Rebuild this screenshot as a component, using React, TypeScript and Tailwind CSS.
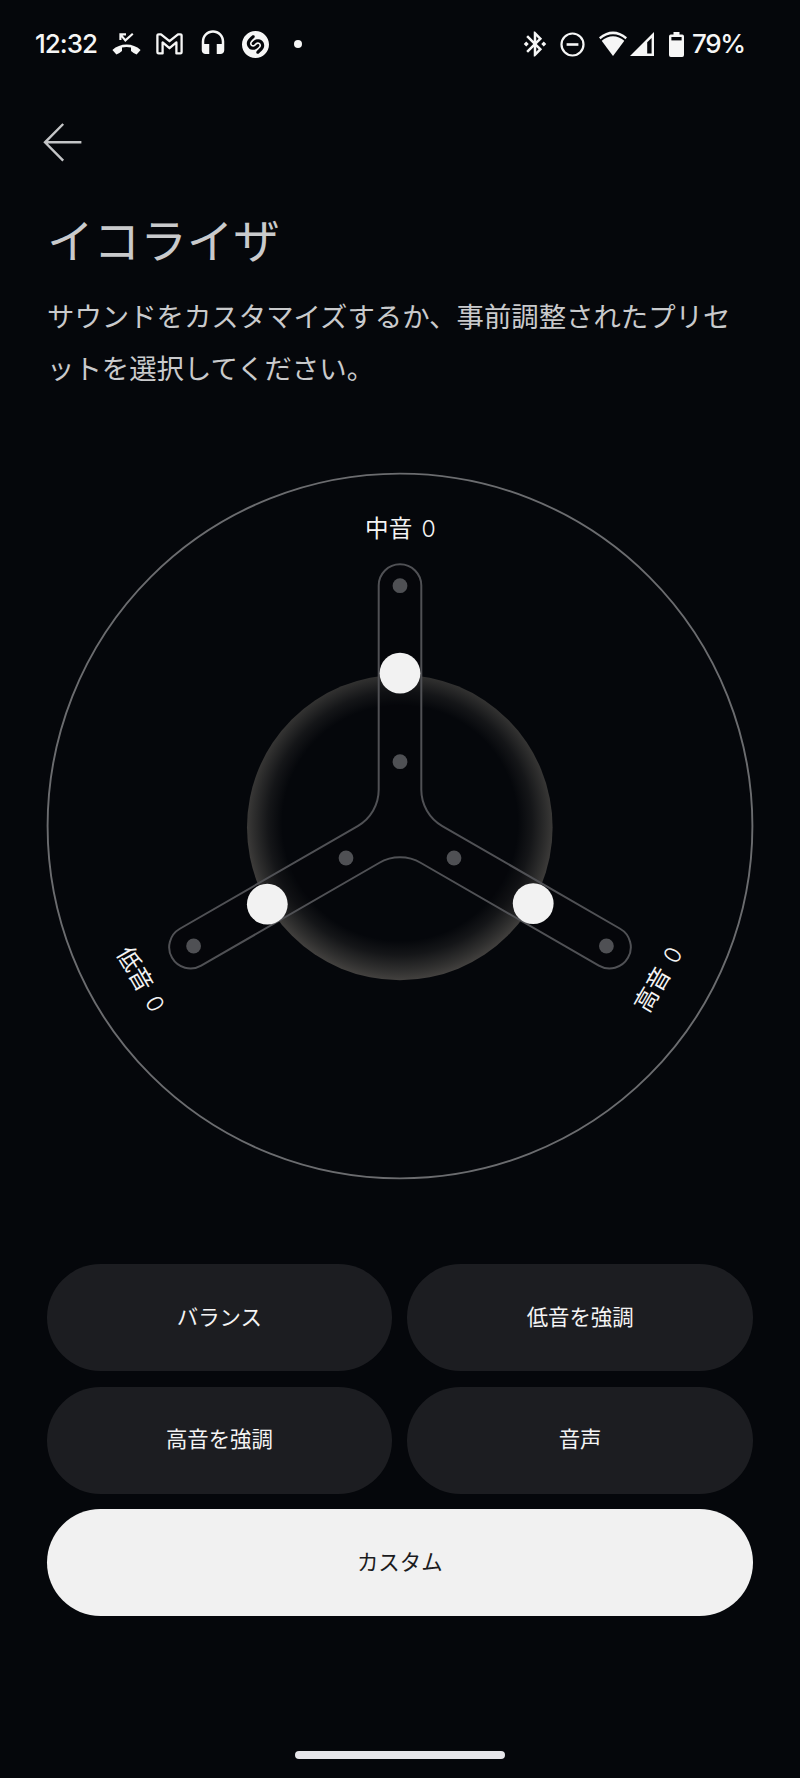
import { useState } from "react";
import { MdBluetoothConnected, MdHeadset } from "react-icons/md";
import { SiShazam } from "react-icons/si";

type Preset = {
  id: string;
  label: string;
  wide?: boolean;
};

type Band = {
  label: string;
  value: number;
  min: [number, number];
  max: [number, number];
  knob: [number, number];
  text: [number, number];
  rotate: number;
};

const PRESETS: Preset[] = [
  { id: "balance", label: "バランス" },
  { id: "bass", label: "低音を強調" },
  { id: "treble", label: "高音を強調" },
  { id: "voice", label: "音声" },
  { id: "custom", label: "カスタム", wide: true },
];

// Dial coordinates, 708 x 708 with the centre at 354,354
const BANDS: Band[] = [
  { label: "中音", value: 0, min: [354, 289.7], max: [354, 113.7], knob: [354, 201.2], text: [354.4, 55.5], rotate: 0 },
  { label: "低音", value: 0, min: [300, 386], max: [147.6, 474], knob: [221.3, 432.2], text: [95.4, 507], rotate: 60 },
  { label: "高音", value: 0, min: [408, 386], max: [560.4, 474], knob: [487.2, 431.6], text: [611.8, 507], rotate: -60 },
];

const SLOT =
  "M332.7 113.5A21.3 21.3 0 0 1 375.3 113.5V317.8A42 42 0 0 0 396.3 354.1L574.15 456.75A21.3 21.3 0 0 1 552.85 493.65L375 391A42 42 0 0 0 333 391L155.15 493.65A21.3 21.3 0 0 1 133.85 456.75L311.7 354.1A42 42 0 0 0 332.7 317.8Z";

function StatusBar() {
  return (
    <div className="h-[88px] pl-[35px] flex items-center text-[#f6f6f6] font-['Inter'] font-medium">
      <span className="w-[77px] text-[26px] leading-none tracking-[-1px]">12:32</span>
      <svg className="w-[29px] h-[22px]" viewBox="0 0 29 22" fill="currentColor">
        <path d="M0.4 17C8 9.6 21 9.6 28.6 17L24.6 21.6Q21.5 20.3 19 18V14.6Q14.5 13.4 10 14.6V18Q7.5 20.3 4.4 21.6Z" />
        <path d="M8.4 7V1.4H14M8.8 1.8L13.4 7.4L20.8 0.8" fill="none" stroke="currentColor" strokeWidth="2.1" />
      </svg>
      <svg className="ml-[15px] w-[27px] h-[22px]" viewBox="0 0 27 22" fill="none" stroke="currentColor" strokeWidth="2.3" strokeLinejoin="round">
        <path d="M1.4 2.6Q1.4 1.3 2.8 1.3H5L13.5 8.2L22 1.3H24.2Q25.6 1.3 25.6 2.6V19.2Q25.6 20.4 24.4 20.4H20.4V9.4L13.5 15.2L6.6 9.4V20.4H2.6Q1.4 20.4 1.4 19.2Z" />
      </svg>
      <MdHeadset className="ml-[15px] size-[30px]" />
      <SiShazam className="ml-[14px] size-[27px]" />
      <span className="ml-[25px] size-[8px] rounded-full bg-[#f6f6f6]" />

      <MdBluetoothConnected className="ml-[218px] size-[30px]" />
      <svg className="ml-[10px] size-[25px]" viewBox="0 0 25 25" fill="none" stroke="currentColor" strokeWidth="2.2">
        <circle cx="12.5" cy="12.5" r="11" />
        <path d="M6.6 12.5H18.4" strokeWidth="2.6" />
      </svg>
      <svg className="ml-[14px] w-[56px] h-[26px]" viewBox="0 0 56 26" fill="currentColor">
        <path d="M0 6.2Q14 -5.4 28 6.2L14 25Z" />
        <path d="M1.5 9.4Q14 -1 26.5 9.4" fill="none" stroke="#05070b" strokeWidth="1.9" />
        <path d="M31 25L55 1V25Z" />
        <path d="M48.2 11.3L52.6 7V22.6H48.2Z" fill="#05070b" />
      </svg>
      <svg className="ml-[14px] w-[15px] h-[25px]" viewBox="0 0 15 25" fill="currentColor">
        <path d="M4.5 0H10.5V2.4H13.2Q15 2.4 15 4.4V23Q15 25 13.2 25H1.8Q0 25 0 23V4.4Q0 2.4 1.8 2.4H4.5Z" />
        <path d="M2.4 5H12.6V8.4H2.4Z" fill="#05070b" />
      </svg>
      <span className="ml-[8px] text-[26px] leading-none tracking-[-1.4px]">79%</span>
    </div>
  );
}

function Dial() {
  return (
    <svg className="mx-auto w-[708px] h-[708px] shrink-0" viewBox="0 0 708 708">
      <defs>
        <radialGradient id="glow" gradientUnits="userSpaceOnUse" cx="354" cy="351" r="157">
          <stop offset="0.75" stopColor="#3d3c3a" stopOpacity="0" />
          <stop offset="0.84" stopColor="#3d3c3a" stopOpacity="0.28" />
          <stop offset="0.93" stopColor="#3d3c3a" stopOpacity="0.72" />
          <stop offset="1" stopColor="#43413f" />
        </radialGradient>
      </defs>
      <circle cx="354" cy="354" r="352.4" fill="none" stroke="#6b6c6f" strokeWidth="1.9" />
      <circle cx="353.8" cy="355.5" r="152.8" fill="url(#glow)" />
      <path d={SLOT} fill="#05070b" fillOpacity="0.3" stroke="#505155" strokeWidth="2" />
      {BANDS.map((band) => (
        <g key={band.label}>
          <circle cx={band.min[0]} cy={band.min[1]} r="7.4" fill="#4f5054" />
          <circle cx={band.max[0]} cy={band.max[1]} r="7.4" fill="#4f5054" />
          <circle cx={band.knob[0]} cy={band.knob[1]} r="20.4" fill="#f2f2f2" />
          <text
            transform={`translate(${band.text[0]} ${band.text[1]}) rotate(${band.rotate})`}
            y="9"
            textAnchor="middle"
            className="fill-[#f4f4f4] text-[23.6px] [word-spacing:4px]"
          >
            {band.label} <tspan className="font-['Inter'] font-light text-[23px]">{band.value}</tspan>
          </text>
        </g>
      ))}
    </svg>
  );
}

export default function App() {
  const [active, setActive] = useState("custom");

  return (
    <main
      lang="ja"
      className="w-[800px] h-[1778px] bg-[#05070b] flex flex-col overflow-hidden text-[#c9cacc] font-['Noto_Sans_CJK_JP',sans-serif]"
    >
      <StatusBar />

      <button type="button" aria-label="戻る" className="mt-[34px] ml-[43px] size-[40px]">
        <svg className="size-[40px]" viewBox="0 0 40 40" fill="none" stroke="#c4c5c7" strokeWidth="2.4">
          <path d="M38.4 20.3H2M20.2 2L2 20.3L20.2 38.6" />
        </svg>
      </button>

      <h1 className="mt-[43px] ml-[47px] h-[66px] text-[46.6px] leading-[66px]">イコライザ</h1>
      <p className="mt-[18px] ml-[47px] h-[104px] text-[27.4px] leading-[52px] whitespace-nowrap">
        サウンドをカスタマイズするか、事前調整されたプリセ
        <br />
        ットを選択してください。
      </p>

      <div className="mt-[79px] flex">
        <Dial />
      </div>

      <div className="mt-[84px] ml-[46.5px] w-[706.5px] grid grid-cols-2 gap-x-[15px] gap-y-[15.5px]">
        {PRESETS.map((preset) => (
          <button
            key={preset.id}
            type="button"
            onClick={() => setActive(preset.id)}
            className={`h-[107px] pb-[3px] rounded-full text-[21.4px] ${preset.wide ? "col-span-2" : ""} ${
              active === preset.id ? "bg-[#f1f1f1] text-[#1b1b1d]" : "bg-[#1c1d21] text-[#f4f4f4]"
            }`}
          >
            {preset.label}
          </button>
        ))}
      </div>

      <div className="mt-auto mb-[19px] mx-auto w-[210px] h-[8px] rounded-full bg-[#e6e6ea]" />
    </main>
  );
}
